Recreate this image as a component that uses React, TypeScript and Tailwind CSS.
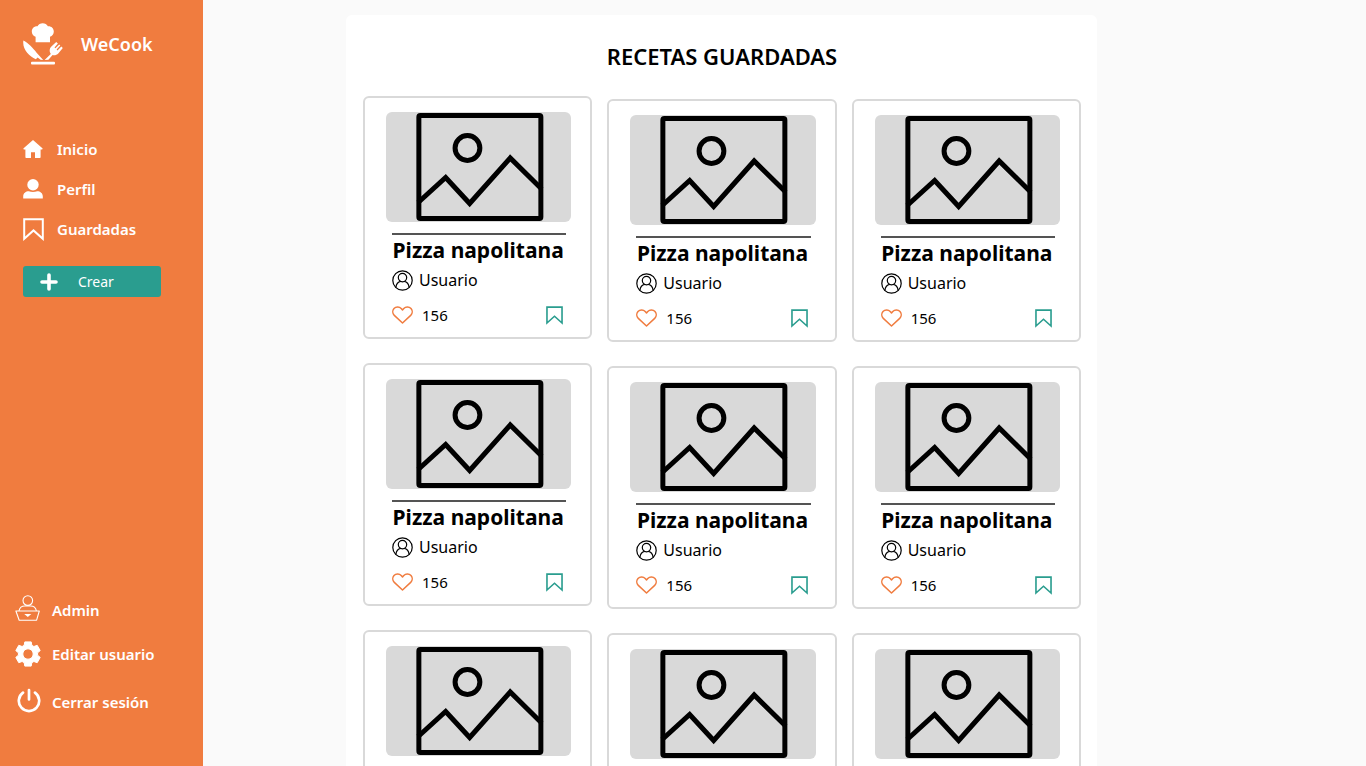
import type { ReactNode } from "react";

type Recipe = { id: number; title: string; user: string; likes: number };

const recipe = (id: number): Recipe => ({ id, title: "Pizza napolitana", user: "Usuario", likes: 156 });

const columns: Recipe[][] = [
  [recipe(1), recipe(4), recipe(7)],
  [recipe(2), recipe(5), recipe(8)],
  [recipe(3), recipe(6), recipe(9)],
];

function LogoIcon() {
  return (
    <svg viewBox="0 0 40 42" className="h-[42px] w-10 shrink-0" fill="currentColor" aria-hidden="true">
      <path d="M12.6 19.2V13.8C10.2 13 8.8 10.8 8.8 8.5C8.8 5.2 11.4 2.9 14.5 3.2C15.5 1.2 17.4 .2 19.7 .2C22 .2 23.9 1.2 24.9 3.2C28.2 2.9 30.8 5.2 30.8 8.5C30.8 10.8 29.4 13 27 13.8V19.2Z" />
      <path d="M.4 17.6C5.2 20.2 10.2 25.2 13.4 29.6L20.2 36.9L17.6 36.7L14.6 34.6L12.8 36.2C6 33 -1 26 .4 17.6Z" />
      <path d="M21.6 37L27.8 31C26 28 26.4 25.4 28.4 23.4L33.2 18.9L34.9 20.5L31.5 24.4L32.4 25.3L36.2 21.5L37.3 22.6L33.6 26.5L34.5 27.4L38.3 23.6L39.8 25.1L35.5 30.2C33.6 32.2 31.3 32.6 29.6 32L25.4 36.8Z" />
      <rect x="8" y="38.8" width="24" height="2.6" rx="1" />
    </svg>
  );
}

function HomeIcon() {
  return (
    <svg viewBox="0 0 20 18" className="h-[18px] w-5" fill="currentColor" aria-hidden="true">
      <path d="M10 0L19.4 8.3C19.9 8.8 19.6 9.4 19 9.4H17.6V17.2Q17.6 18 16.8 18H12V12.2H8V18H3.2Q2.4 18 2.4 17.2V9.4H1C.4 9.4 .1 8.8 .6 8.3Z" />
    </svg>
  );
}

function PersonIcon() {
  return (
    <svg viewBox="0 0 20 20" className="h-5 w-5" fill="currentColor" aria-hidden="true">
      <circle cx="10" cy="5.8" r="5.7" />
      <path d="M.2 19.6V17.2C.2 14.4 2.8 12.3 5.8 12.3Q10 13.8 14.2 12.3C17.2 12.3 19.8 14.4 19.8 17.2V19.6Z" />
    </svg>
  );
}

function BookmarkIcon({ className }: { className: string }) {
  return (
    <svg viewBox="0 0 21 23" className={className} fill="none" stroke="currentColor" strokeWidth="2" aria-hidden="true">
      <path d="M1.2 1.2H19.8V20.8L10.5 12.4L1.2 20.8Z" />
    </svg>
  );
}

function PlusIcon() {
  return (
    <svg viewBox="0 0 18 18" className="h-[18px] w-[18px]" fill="none" stroke="currentColor" strokeWidth="3.6" strokeLinecap="round" aria-hidden="true">
      <path d="M9 2V16M2 9H16" />
    </svg>
  );
}

function AdminIcon() {
  return (
    <svg viewBox="0 0 25 26" className="-mt-1 h-[26px] w-[25px]" fill="none" stroke="currentColor" strokeWidth="1.1" aria-hidden="true">
      <circle cx="12.8" cy="5.6" r="4.8" />
      <path d="M4 15.8C4.6 13 7 11 9.8 11H15.6C18.4 11 20.8 13 21.4 15.8" />
      <path d="M.9 16H24.3L21.6 25.2H4.2Z" strokeLinejoin="round" />
      <path d="M10.8 19.6H14.8L12.8 21.2Z" />
    </svg>
  );
}

function GearIcon() {
  return (
    <svg viewBox="0 0 26 26" className="h-[26px] w-[26px]" fill="currentColor" stroke="currentColor" strokeWidth="1" strokeLinejoin="round" aria-hidden="true">
      <path
        fillRule="evenodd"
        d="M9.8 .9H16.2L16.8 4.3L18.9 5.5L22.2 4.3L25.2 9.6L22.6 11.8V14.2L25.2 16.4L22.2 21.7L18.9 20.5L16.8 21.7L16.2 25.1H9.8L9.2 21.7L7.1 20.5L3.8 21.7L.8 16.4L3.4 14.2V11.8L.8 9.6L3.8 4.3L7.1 5.5L9.2 4.3ZM13 7.8A5.2 5.2 0 1 0 13 18.2A5.2 5.2 0 1 0 13 7.8Z"
      />
    </svg>
  );
}

function PowerIcon() {
  return (
    <svg viewBox="0 0 24 25" className="-mt-[3px] ml-[2px] h-[25px] w-6" fill="none" stroke="currentColor" strokeWidth="2.7" strokeLinecap="round" aria-hidden="true">
      <path d="M12 2V11.5M6 4.6A10.2 10.2 0 1 0 18 4.6" />
    </svg>
  );
}

function PlaceholderPicture() {
  return (
    <svg viewBox="0 0 185 110" className="block h-[110px] w-full" fill="none" stroke="#000" strokeWidth="5" role="img" aria-label="Foto de la receta">
      <rect x="32.7" y="3.4" width="122" height="103" rx="1.5" />
      <circle cx="81.3" cy="36" r="12.4" />
      <path d="M32 90.5L59.5 65.5L83.5 91.5L124 46L155.5 77" />
    </svg>
  );
}

function UserCircleIcon() {
  return (
    <svg viewBox="0 0 21 21" className="h-[21px] w-[21px] shrink-0" fill="none" stroke="currentColor" strokeWidth="1.2" aria-hidden="true">
      <circle cx="10.5" cy="10.5" r="9.7" />
      <circle cx="10.5" cy="7.6" r="4.2" />
      <path d="M3.9 17.4C4.3 13.8 6.3 11.8 8.8 11.4M17.1 17.4C16.7 13.8 14.7 11.8 12.2 11.4" />
    </svg>
  );
}

function HeartIcon() {
  return (
    <svg viewBox="0 0 21 18" className="h-[18px] w-[21px]" fill="none" stroke="currentColor" strokeWidth="1.5" strokeLinejoin="round" aria-hidden="true">
      <path d="M10.5 17L2.3 9.4C.4 7.5 .3 4.5 2 2.6C3.9 .4 7.3 .4 9.2 2.4L10.5 3.9L11.8 2.4C13.7 .4 17.1 .4 19 2.6C20.7 4.5 20.6 7.5 18.7 9.4Z" />
    </svg>
  );
}

function NavLink({ icon, slot, children }: { icon: ReactNode; slot: string; children: ReactNode }) {
  return (
    <a href="#" className="flex h-5 items-center text-[15px] leading-5 font-semibold">
      <span className={`flex shrink-0 ${slot}`}>{icon}</span>
      {children}
    </a>
  );
}

function RecipeCard({ data }: { data: Recipe }) {
  return (
    <article className="rounded-md border-2 border-[#d9d9d9] bg-white pt-[14px] pr-[19px] pb-3 pl-[21px]">
      <div className="overflow-hidden rounded-md bg-[#d9d9d9]">
        <PlaceholderPicture />
      </div>
      <div className="mt-[11px] mr-[5px] ml-[6px] border-t-2 border-[#545454]">
        <h2 className="pr-[2px] text-center text-[21px] leading-[31px] font-bold whitespace-nowrap">{data.title}</h2>
        <p className="mt-1 flex items-center gap-[6px] text-[16px] leading-[21px]">
          <UserCircleIcon />
          {data.user}
        </p>
        <div className="mt-[14px] flex h-5 items-center justify-between">
          <button type="button" aria-label="Me gusta" className="flex items-center gap-[9px] text-[15px] leading-5">
            <span className="text-[#f07c3f]">
              <HeartIcon />
            </span>
            {data.likes}
          </button>
          <button type="button" aria-label="Quitar de guardadas" className="pr-[3px] text-[#2a9d8f]">
            <BookmarkIcon className="h-[19px] w-[17px]" />
          </button>
        </div>
      </div>
    </article>
  );
}

export default function App() {
  return (
    <div className="flex min-h-screen items-start bg-[#fafafa] font-['Noto_Sans',sans-serif] text-black">
      <aside className="sticky top-0 flex h-screen w-[203px] shrink-0 flex-col bg-[#f07c3f] text-white">
        <a href="#" className="flex items-center gap-[18px] pt-[23px] pl-[23px] text-[18px] leading-6 font-semibold">
          <LogoIcon />
          WeCook
        </a>
        <nav aria-label="Principal" className="mt-[74px] flex flex-col gap-5 pl-[23px]">
          <NavLink slot="w-[34px]" icon={<HomeIcon />}>Inicio</NavLink>
          <NavLink slot="w-[34px]" icon={<PersonIcon />}>Perfil</NavLink>
          <NavLink slot="w-[34px]" icon={<BookmarkIcon className="h-[23px] w-[21px]" />}>Guardadas</NavLink>
        </nav>
        <button type="button" className="mt-[27px] ml-[23px] flex h-[31px] w-[138px] items-center gap-5 rounded-[3px] bg-[#2a9d8f] pl-[17px] text-[14px] leading-5">
          <PlusIcon />
          Crear
        </button>
        <nav aria-label="Cuenta" className="mt-auto flex flex-col gap-6 pb-[54px] pl-[15px]">
          <NavLink slot="w-[37px]" icon={<AdminIcon />}>Admin</NavLink>
          <NavLink slot="w-[37px]" icon={<GearIcon />}>Editar usuario</NavLink>
          <div className="pt-1">
            <NavLink slot="w-[37px]" icon={<PowerIcon />}>Cerrar sesión</NavLink>
          </div>
        </nav>
      </aside>
      <main className="min-w-0 flex-1 pt-[15px] pr-[126px]">
        <section className="mx-auto max-w-[751px] rounded-t-md bg-white pr-4 pb-6 pl-[17px]">
          <h1 className="pt-[25px] text-center text-[22px] leading-8 font-semibold">RECETAS GUARDADAS</h1>
          <div className="mt-6 grid grid-cols-3 gap-[15px]">
            {columns.map((items, i) => (
              <div key={i} className={`flex flex-col gap-6 ${i > 0 ? "pt-[3px]" : ""}`}>
                {items.map((r) => (
                  <RecipeCard key={r.id} data={r} />
                ))}
              </div>
            ))}
          </div>
        </section>
      </main>
    </div>
  );
}
